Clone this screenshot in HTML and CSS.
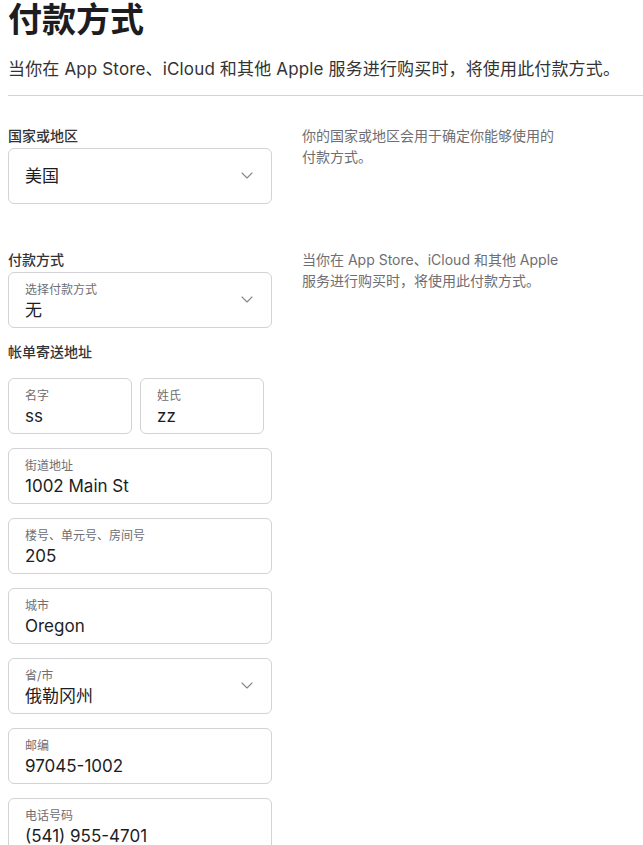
FILE: index.html
```html
<!DOCTYPE html>
<html lang="zh-CN">
<head>
<meta charset="utf-8">
<title>付款方式</title>
<link rel="stylesheet" href="styles.css">
</head>
<body>
<h1 class="title">付款方式</h1>
<p class="subtitle">当你在 App Store、iCloud 和其他 Apple 服务进行购买时，将使用此付款方式。</p>
<hr class="divider">

<section class="section section-country">
  <div class="main">
    <div class="section-label">国家或地区</div>
    <div class="field select single">
      <div class="value">美国</div>
      <svg class="chevron" width="12" height="7" viewBox="0 0 12 7"><path d="M1 1l5 5 5-5" fill="none" stroke="#86868b" stroke-width="1.1" stroke-linecap="round" stroke-linejoin="round"/></svg>
    </div>
  </div>
  <p class="desc">你的国家或地区会用于确定你能够使用的付款方式。</p>
</section>

<section class="section section-payment">
  <div class="main">
    <div class="section-label">付款方式</div>
    <div class="field select">
      <div class="field-label">选择付款方式</div>
      <div class="value">无</div>
      <svg class="chevron" width="12" height="7" viewBox="0 0 12 7"><path d="M1 1l5 5 5-5" fill="none" stroke="#86868b" stroke-width="1.1" stroke-linecap="round" stroke-linejoin="round"/></svg>
    </div>
    <div class="section-label billing">帐单寄送地址</div>
    <div class="fields">
      <div class="row">
        <div class="field half">
          <div class="field-label">名字</div>
          <div class="value">ss</div>
        </div>
        <div class="field half">
          <div class="field-label">姓氏</div>
          <div class="value">zz</div>
        </div>
      </div>
      <div class="field">
        <div class="field-label">街道地址</div>
        <div class="value">1002 Main St</div>
      </div>
      <div class="field">
        <div class="field-label">楼号、单元号、房间号</div>
        <div class="value">205</div>
      </div>
      <div class="field">
        <div class="field-label">城市</div>
        <div class="value">Oregon</div>
      </div>
      <div class="field select">
        <div class="field-label">省/市</div>
        <div class="value">俄勒冈州</div>
        <svg class="chevron" width="12" height="7" viewBox="0 0 12 7"><path d="M1 1l5 5 5-5" fill="none" stroke="#86868b" stroke-width="1.1" stroke-linecap="round" stroke-linejoin="round"/></svg>
      </div>
      <div class="field">
        <div class="field-label">邮编</div>
        <div class="value">97045-1002</div>
      </div>
      <div class="field">
        <div class="field-label">电话号码</div>
        <div class="value">(541) 955-4701</div>
      </div>
    </div>
  </div>
  <p class="desc">当你在 App Store、iCloud 和其他 Apple 服务进行购买时，将使用此付款方式。</p>
</section>
</body>
</html>
```

FILE: styles.css
```css
html, body {
  background: #ffffff;
}
body {
  margin: 0;
  padding: 0 0 0 8px;
  font-family: Inter, "Noto Sans CJK SC", sans-serif;
  color: #1d1d1f;
  overflow: hidden;
}
.title {
  margin: 0;
  font-size: 34px;
  line-height: 39px;
  font-weight: 700;
  color: #1d1d1f;
}
.subtitle {
  margin: 18px 0 0;
  font-size: 17px;
  line-height: 25px;
  color: #333336;
  white-space: nowrap;
  letter-spacing: 0.15px;
}
.divider {
  margin: 13px 0 0;
  border: 0;
  border-top: 1px solid #d2d2d7;
  height: 0;
}
.section {
  display: grid;
  grid-template-columns: 264px 264px;
  column-gap: 30px;
  align-items: start;
}
.section-country {
  margin-top: 31px;
}
.section-payment {
  margin-top: 47px;
}
.section-label {
  font-size: 14px;
  line-height: 18px;
  font-weight: 500;
  color: #333336;
  margin-bottom: 3px;
}
.section-label.billing {
  margin-top: 15px;
  margin-bottom: 17px;
}
.desc {
  margin: -2px 0 0;
  font-size: 14px;
  line-height: 21px;
  color: #6e6e73;
}
.field {
  position: relative;
  box-sizing: border-box;
  height: 56px;
  border: 1px solid #d2d2d7;
  border-radius: 6px;
  padding: 9px 40px 0 16px;
  background: #fff;
}
.field.single {
  display: flex;
  align-items: center;
  padding-top: 0;
}
.field-label {
  font-size: 12px;
  line-height: 16px;
  color: #6e6e73;
}
.value {
  font-size: 17px;
  line-height: 24px;
  color: #1d1d1f;
  white-space: nowrap;
}
.chevron {
  position: absolute;
  right: 18px;
  top: 50%;
  margin-top: -4px;
}
.fields {
  display: flex;
  flex-direction: column;
  gap: 14px;
}
.row {
  display: flex;
  gap: 8px;
}
.field.half {
  width: 124px;
  padding-right: 8px;
}
```
